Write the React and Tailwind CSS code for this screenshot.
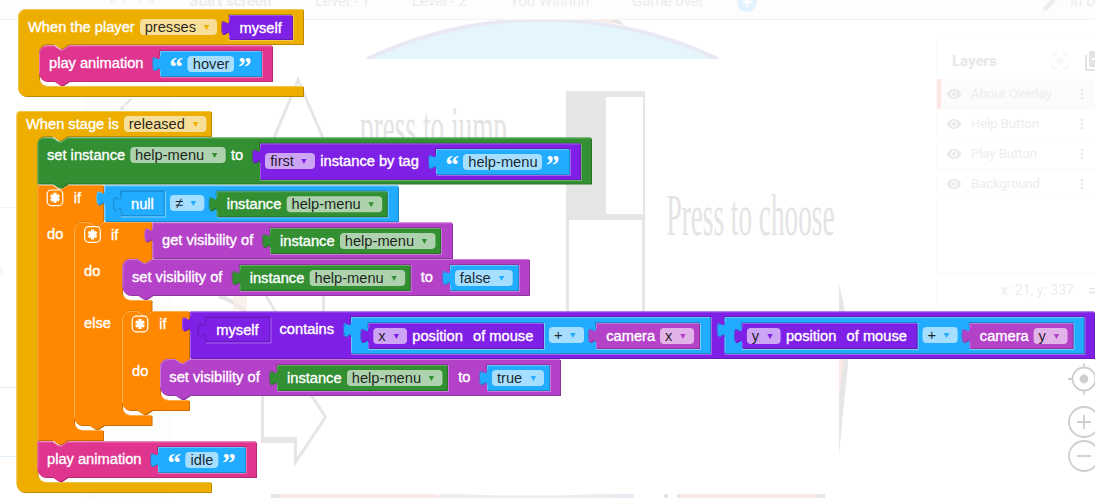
import React from "react";
import { MdLibraryAdd, MdCenterFocusStrong, MdVisibility, MdMoreVert, MdEdit, MdUndo, MdRedo, MdBrush } from "react-icons/md";

const C = {
  yellow: ["#edae00", "#be8b00", "#f2c64d"],
  pink: ["#e0358f", "#b32a72", "#e972b1"],
  blue: ["#22acff", "#1b8acc", "#7accff"],
  green: ["#328f32", "#287228", "#70b170"],
  violet: ["#7f20e6", "#661ab8", "#a563ee"],
  orange: ["#ff8800", "#cc6d00", "#ffac4d"],
  purple: ["#b342c8", "#8f35a0", "#ca7bd9"],
};

const NOTCH = "l 6,4 3,0 6,-4";
const NOTCH_BACK = "l -6,4 -3,0 -6,-4";

function Bevel({ d, light, c }) {
  return (
    <g>
      <path d={d} fill={C[c][1]} transform="translate(1 1)" />
      <path d={d} fill={C[c][0]} />
      <path d={light} fill="none" stroke={C[c][2]} strokeWidth="1" />
    </g>
  );
}

/* Value block with a puzzle tab on its left edge. */
function Value({ x, y, r, b, c, on }) {
  const w = r - 1;
  const h = b - 1;
  const tab = "c 0,-10 -8,8 -8,-7.5 s 8,2.5 8,-7.5";
  const d = `M ${x},${y} H ${w} V ${h} H ${x} V ${y + 20} ${tab} Z`;
  const same = on === c;
  return (
    <g>
      {on && (
        <g>
          <path d={`M ${x - 0.5},${y + 5} V ${y - 0.5} H ${r}`} fill="none" stroke={C[on][1]} />
          <path d={`M ${x},${b + 0.5} H ${r + 0.5} V ${y}`} fill="none" stroke={C[on][2]} />
        </g>
      )}
      {!same && <path d={d} fill={C[c][1]} transform="translate(1 1)" />}
      <path d={d} fill={C[c][0]} stroke={same ? C[c][1] : "none"} strokeWidth="0.9" />
      {!same && (
        <path
          d={`M ${x + 0.5},${h} V ${y + 20} M ${x + 0.5},${y + 5} V ${y + 0.5} H ${w}`}
          fill="none"
          stroke={C[c][2]}
          strokeOpacity="0.8"
        />
      )}
      <path
        d={`M ${x - 2},${y + 7.2} C ${x - 6},${y + 6} ${x - 7.6},${y + 7} ${x - 7.6},${y + 12.5} C ${x - 7.6},${y + 16} ${x - 7},${y + 17.5} ${x - 6},${y + 18}`}
        fill="none"
        stroke={on ? C[on][1] : C[c][2]}
        strokeOpacity="0.7"
      />
    </g>
  );
}

/* Statement block. `tl` and `bl` are the radii of its left corners. */
function Statement({ x, y, r, b, c, tl = 0, bl = 0 }) {
  const d = `M ${x},${y + tl} a ${tl},${tl} 0 0 1 ${tl},${-tl} H ${x + 15} ${NOTCH} H ${r - 1} V ${b - 1} H ${x + 30} ${NOTCH_BACK} H ${x + bl} a ${bl},${bl} 0 0 1 ${-bl},${-bl} Z`;
  const light = `M ${x + 0.5},${b - 1 - bl} V ${y + tl} a ${tl},${tl} 0 0 1 ${tl},${-tl + 0.5} H ${x + 15} ${NOTCH} H ${r - 1}`;
  return <Bevel d={d} light={light} c={c} />;
}

/* Block that wraps one or more inner stacks: arms = [[innerTop, innerBottom], ...] */
function Wrap({ x, y, r, b, c, inner, arms, tl = 0, bl = 0, hat }) {
  const top = hat ? "" : `H ${x + 15} ${NOTCH}`;
  const bottom = hat ? "" : `H ${x + 30} ${NOTCH_BACK}`;
  const mouths = arms
    .map(([t, e]) => `V ${t} H ${inner + 30} ${NOTCH_BACK} h -7 a 8,8 0 0 0 -8,8 V ${e - 8} a 8,8 0 0 0 8,8 H ${r - 1}`)
    .join(" ");
  const d = `M ${x},${y + tl} a ${tl},${tl} 0 0 1 ${tl},${-tl} ${top} H ${r - 1} ${mouths} V ${b - 1} ${bottom} H ${x + bl} a ${bl},${bl} 0 0 1 ${-bl},${-bl} Z`;
  let light = `M ${x + 0.5},${b - 1 - bl} V ${y + tl} a ${tl},${tl} 0 0 1 ${tl},${-tl + 0.5} ${top} H ${r - 1}`;
  arms.forEach(([, e]) => {
    light += ` M ${inner + 1.5},${e - 4} a 8,8 0 0 0 6.5,4.5 H ${r - 1}`;
  });
  return <Bevel d={d} light={light} c={c} />;
}

function T({ x, y, children }) {
  return (
    <text x={x} y={y} fill="#fff" stroke="#fff" strokeWidth="0.35">
      {children}
    </text>
  );
}

function Field({ x, y, r, tx, c, arrow, children }) {
  return (
    <g>
      <rect x={x} y={y} width={r - x} height="16" rx="4" fill="#fff" fillOpacity="0.6" />
      <text x={tx} y={y + 13} fill="#000" fillOpacity="0.85">
        {children}
      </text>
      {arrow && <path d={`M ${arrow + 0.2},${y + 6} h 5.4 l -2.7,5 z`} fill={C[c][0]} />}
    </g>
  );
}

function Quoted({ x, y, r, on, bx, br, children }) {
  const quote = "font-['Liberation_Serif',serif] text-[27px] font-bold";
  return (
    <g>
      <Value x={x} y={y} r={r} b={y + 26} c="blue" on={on} />
      <text x={x + 9.5} y={y + 25} className={quote} fill="#fff">“</text>
      <Field x={bx} y={y + 5} r={br} tx={bx + 5.3} c="blue">{children}</Field>
      <text x={br + 4} y={y + 25} className={quote} fill="#fff">”</text>
    </g>
  );
}

function Instance({ x, y, on }) {
  return (
    <g>
      <Value x={x} y={y} r={x + 171} b={y + 26} c="green" on={on} />
      <T x={x + 10} y={y + 18}>instance</T>
      <Field x={x + 70} y={y + 5} r={x + 165.5} tx={x + 74.8} c="green" arrow={x + 151.5}>help-menu</Field>
    </g>
  );
}

function Mutator({ x, y }) {
  const cx = x + 8.5;
  const cy = y + 8.5;
  return (
    <g stroke="#fff" fill="none">
      <rect x={x + 0.7} y={y + 0.7} width="15.6" height="15.6" rx="4" strokeWidth="1.2" />
      <path
        strokeWidth="3.2"
        d={`M ${cx},${cy - 5} V ${cy + 5} M ${cx - 4.2},${cy - 2.5} L ${cx + 4.2},${cy + 2.5} M ${cx - 4.2},${cy + 2.5} L ${cx + 4.2},${cy - 2.5}`}
      />
    </g>
  );
}

function AxisSum({ x, axis }) {
  return (
    <g>
      <Value x={x} y={317} r={x + 360} b={354} c="blue" on="violet" />
      <Value x={x + 17.3} y={323} r={x + 193} b={349} c="violet" on="blue" />
      <Field x={x + 22.3} y={328} r={x + 56} tx={x + 27.2} c="violet" arrow={x + 42.5}>{axis}</Field>
      <T x={x + 61.3} y={341}>position</T>
      <T x={x + 122} y={341}>of mouse</T>
      <Field x={x + 198} y={327} r={x + 233} tx={x + 203} c="blue" arrow={x + 219}>+</Field>
      <Value x={x + 245} y={323} r={x + 349} b={349} c="purple" on="blue" />
      <T x={x + 255.2} y={341}>camera</T>
      <Field x={x + 309} y={328} r={x + 343} tx={x + 314} c="purple" arrow={x + 329}>{axis}</Field>
    </g>
  );
}

function Blocks() {
  return (
    <svg width="1095" height="498" className="absolute inset-0 font-['Liberation_Sans',Arial,sans-serif] text-[14.667px]">
      <Wrap x={18} y={9} r={304} b={97} c="yellow" inner={39} arms={[[44, 86]]} tl={8} bl={8} hat />
      <T x={28} y={32}>When the player</T>
      <Field x={140} y={19} r={217} tx={144.7} c="yellow" arrow={203.7}>presses</Field>
      <Value x={229} y={15} r={293} b={40} c="violet" on="yellow" />
      <T x={239.5} y={33}>myself</T>
      <Statement x={39} y={45.5} r={273} b={82} c="pink" tl={8} bl={8} />
      <T x={49} y={68}>play animation</T>
      <Quoted x={160} y={51} r={262} on="pink" bx={187.5} br={234}>hover</Quoted>

      <Wrap x={16.5} y={111} r={212} b={493} c="yellow" inner={37.5} arms={[[136, 482]]} tl={4} bl={8} hat />
      <T x={26} y={129}>When stage is</T>
      <Field x={124} y={116} r={206.5} tx={128.7} c="yellow" arrow={192.7}>released</Field>

      <Wrap x={37.5} y={185} r={104} b={441} c="orange" inner={74} arms={[[221.5, 430]]} />
      <Wrap x={74} y={222} r={152.5} b={426} c="orange" inner={122} arms={[[258.5, 300], [310.5, 415]]} tl={8} bl={8} />
      <Wrap x={122} y={311} r={190} b={411} c="orange" inner={160} arms={[[358.5, 400]]} tl={8} bl={8} />

      <Statement x={37.5} y={137.5} r={592} b={184.5} c="green" tl={6} />
      <T x={47} y={160}>set instance</T>
      <Field x={130.3} y={147} r={225.7} tx={135} c="green" arrow={211.7}>help-menu</Field>
      <T x={231} y={160}>to</T>
      <Value x={260} y={143.5} r={581} b={180} c="violet" on="green" />
      <Field x={265} y={153} r={315} tx={270.3} c="violet" arrow={301}>first</Field>
      <T x={320.3} y={166}>instance by tag</T>
      <Quoted x={436} y={149} r={570} on="violet" bx={463} br={542}>help-menu</Quoted>

      <Mutator x={46.5} y={189.3} />
      <T x={73.7} y={202.5}>if</T>
      <Value x={104.5} y={185.5} r={399} b={222} c="blue" />
      <Value x={121.3} y={191.5} r={165} b={216.5} c="blue" on="blue" />
      <T x={131} y={209}>null</T>
      <Field x={170} y={195} r={204.3} tx={175} c="blue" arrow={190.5}>≠</Field>
      <Instance x={216.7} y={191.3} on="blue" />
      <T x={47} y={239}>do</T>

      <Mutator x={84} y={226} />
      <T x={111} y={239.5}>if</T>
      <Value x={152.5} y={222.5} r={453} b={259} c="purple" />
      <T x={162} y={245}>get visibility of</T>
      <Instance x={270} y={228} on="purple" />
      <T x={84} y={276}>do</T>
      <Statement x={122.5} y={259} r={530} b={296} c="purple" tl={8} bl={8} />
      <T x={132} y={282}>set visibility of</T>
      <Instance x={239.7} y={265} on="purple" />
      <T x={420.7} y={282}>to</T>
      <Value x={450} y={265} r={519} b={291} c="blue" on="purple" />
      <Field x={455} y={270} r={512.7} tx={459.8} c="blue" arrow={498.7}>false</Field>

      <T x={84} y={328}>else</T>
      <Mutator x={131.5} y={315.5} />
      <T x={159.3} y={328.5}>if</T>
      <Value x={190} y={311.5} r={1095} b={359} c="violet" />
      <Value x={206} y={317.5} r={270.5} b={342.5} c="violet" on="violet" />
      <T x={216.3} y={335}>myself</T>
      <T x={279.5} y={334}>contains</T>
      <AxisSum x={351} axis="x" />
      <AxisSum x={724.6} axis="y" />
      <T x={132} y={376}>do</T>
      <Statement x={160} y={359} r={561} b={396} c="purple" tl={8} bl={8} />
      <T x={169.3} y={382}>set visibility of</T>
      <Instance x={277} y={365} on="purple" />
      <T x={458.3} y={382}>to</T>
      <Value x={487} y={365} r={550} b={391} c="blue" on="purple" />
      <Field x={492} y={370} r={544} tx={497} c="blue" arrow={530.5}>true</Field>

      <Statement x={37.5} y={441.5} r={257} b={478} c="pink" bl={8} />
      <T x={47} y={464}>play animation</T>
      <Quoted x={158} y={447} r={246} on="pink" bx={185.3} br={218.3}>idle</Quoted>
    </svg>
  );
}

function Scene() {
  return (
    <svg width="1095" height="498" className="absolute inset-0">
      <rect x="85" y="20" width="86" height="478" fill="#fdfdfd" />
      <rect x="92" y="20" width="1" height="478" fill="#fafafa" />
      <path d="M0 207.5 H16" stroke="#f3f3f3" />
      <path d="M0 387.5 H16 M0 456.5 H16" stroke="#e3f1fb" />
      <path d="M0 268 Q2 269 2 274" fill="none" stroke="#eeeeee" strokeWidth="1.5" />
      <path d="M365 59 A 414 414 0 0 1 720 59 Z" fill="#e4f6fc" />
      <path d="M575 19.5 H612 L624 25 Q600 21 575 19.5" fill="#fbe9e5" />
      <path d="M610 19.5 H619 L624 25.5 L616 23 Z" fill="#e5e5e5" />
      <path d="M367 59 A 412 412 0 0 1 718 59" fill="none" stroke="#e9e9f5" strokeWidth="4" />
      <rect x="355" y="59.3" width="380" height="5" fill="#fff" />
      <g fill="none" stroke="#e6e6e6" strokeWidth="3">
        <path d="M274 138 L298 80 L323 138" />
        <path d="M262.5 380 V440 H295.5 V462 L325.5 417 L300 378" />
        <path d="M261 440 H297" strokeWidth="6" />
        <path d="M567.5 220 V312 M643.5 220 V312" />
        <path d="M323.5 290 V312" />
        <path d="M266 296 L277 314" />
        <path d="M219 296 Q235 301 246 313" strokeWidth="4" />
      </g>
      <rect x="233" y="296" width="14" height="14" fill="#fbe9e5" fillOpacity="0.7" />
      <path d="M566 91 H645 V220 H566 Z M606 97 V214 H643 V97 Z" fill="#e6e6e6" fillRule="evenodd" />
      <g fill="#e4e4e4" className="font-['Liberation_Serif',serif] text-[60px]">
        <text x="360" y="147" textLength="147" lengthAdjust="spacingAndGlyphs">press to jump</text>
        <text x="666.5" y="234.5" textLength="168" lengthAdjust="spacingAndGlyphs">Press to choose</text>
      </g>
      <path d="M839 284 Q850 325 848 365 Q843 410 839 455 Z" fill="#e6e6e6" />
      <path d="M839 355 H844 L839 400 Z" fill="#fbe9e5" />
      <g fill="#fce9e7">
        <rect x="280" y="494" width="158" height="4" />
        <rect x="681" y="494" width="138" height="4" />
      </g>
      <g fill="#e6e6e6">
        <rect x="271" y="494" width="9" height="4" />
        <path d="M440 494 H456 Q530 497 600 494 H612 V498 H436 Z" fill="#ededed" />
        <rect x="612" y="494" width="22" height="4" fill="#e9eaf2" />
        <rect x="664" y="494" width="4" height="4" />
        <rect x="677" y="494" width="4" height="4" />
        <rect x="817" y="494" width="8" height="4" />
      </g>
      <g fill="none" stroke="#cecece" strokeWidth="1.8">
        <circle cx="1084" cy="379" r="11.5" />
        <path d="M1084 363.5 V367.5 M1084 390.5 V394.5 M1068 379 H1072" />
        <circle cx="1084" cy="379" r="4.4" fill="#cecece" stroke="none" />
        <circle cx="1084" cy="422" r="15" />
        <path d="M1077 422 H1091 M1084 415 V429" />
        <circle cx="1084" cy="456" r="15" />
        <path d="M1077 456 H1091" />
      </g>
    </svg>
  );
}

function TopBar() {
  return (
    <header className="h-5 overflow-hidden border-b border-[#f4f4f4] bg-[#fdfdfd] text-[15px] leading-5 whitespace-nowrap text-[#ececec]">
      <div className="-mt-[9px] flex h-5 pl-[109px]">
        <MdUndo className="size-[18px] shrink-0 text-[#f2f2f2]" />
        <MdRedo className="ml-[11px] size-[18px] shrink-0 text-[#f2f2f2]" />
        <span className="ml-[33px] w-[126px] shrink-0 font-bold">Start screen</span>
        <span className="w-[97px] shrink-0">Level - 1</span>
        <span className="w-[98px] shrink-0">Level - 2</span>
        <span className="w-[122px] shrink-0">You Winnnn</span>
        <span className="w-[105px] shrink-0">Game over</span>
        <span className="mt-px flex size-5 shrink-0 items-center justify-center rounded-full bg-[#e3f3fd] text-[18px] font-bold text-white">+</span>
        <MdEdit className="mt-0.5 ml-[284px] size-5 shrink-0" />
        <span className="ml-[9px] shrink-0">In Development</span>
      </div>
    </header>
  );
}

const layers = ["About Overlay", "Help Button", "Play Button", "Background"];

function LayersPanel() {
  return (
    <aside className="mt-[18px] ml-[936px] h-[270px] w-[159px] overflow-hidden border border-r-0 border-[#fbfbfb] text-[13px] text-[#ededed]">
      <div className="flex h-10 items-center pt-1 pl-[15px]">
        <h2 className="w-[97px] shrink-0 text-[15px] font-bold text-[#e8e8e8]">Layers</h2>
        <MdCenterFocusStrong className="size-[22px] shrink-0 text-[#f7f7f7]" />
        <MdLibraryAdd className="ml-3 size-6 shrink-0 text-[#e4e4e4]" />
      </div>
      {layers.map((name, i) => (
        <div
          key={name}
          className={
            i === 0
              ? "flex h-[30px] items-center border-b border-l-4 border-b-[#f9f9f9] border-l-[#ffe5e4] bg-[#fbfbfb] pl-[5px]"
              : "flex h-[30px] items-center border-b border-[#fafafa] pl-[9px]"
          }
        >
          <MdVisibility className="size-4 shrink-0 text-[#eaeaea]" />
          <span className="ml-[9px] w-[103px] shrink-0 whitespace-nowrap">{name}</span>
          <MdMoreVert className="size-4 shrink-0 text-[#e9e9e9]" />
        </div>
      ))}
      <div className="mt-[73px] flex h-9 items-center border-t border-[#fafafa] pl-[64px] text-[14px]">
        <span className="w-[87px] shrink-0 whitespace-nowrap">x: 21, y: 337</span>
        <span className="text-lg text-[#e2e2e2]">=</span>
      </div>
    </aside>
  );
}

export default function App() {
  return (
    <main className="relative h-[498px] w-[1095px] overflow-hidden bg-white font-['Roboto',sans-serif]">
      <Scene />
      <div className="relative">
        <TopBar />
        <LayersPanel />
      </div>
      <MdBrush className="absolute top-[96px] left-[118px] size-4 text-[#e6e6e6]" />
      <Blocks />
    </main>
  );
}
